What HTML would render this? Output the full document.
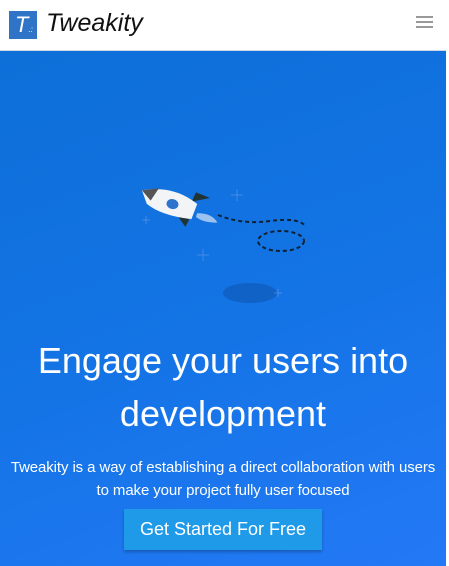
<!DOCTYPE html><html><head><style>
body{margin:0;width:449px;height:566px;overflow:hidden;background:#fff;font-family:"Liberation Sans",sans-serif;position:relative}
.hd{position:absolute;left:0;top:0;width:446px;height:50px;background:#fff;border-bottom:1px solid #cfd8e3}
.logo{position:absolute;left:9px;top:11px;width:28px;height:28px;background:#2f74c6;color:#fff;font-size:22px;font-style:italic;line-height:28px;text-indent:6px}
.name{position:absolute;left:46px;top:9px;font-size:25px;font-style:italic;color:#111}
.hb{position:absolute;left:416px;width:17px;height:2px;background:#999}
.hero{position:absolute;left:0;top:51px;width:446px;height:515px;background:linear-gradient(160deg,#0d6fd8 0%,#1474e6 55%,#2479f6 100%)}
h1{position:absolute;top:283px;left:0;width:446px;margin:0;text-align:center;color:#fff;font-weight:normal;font-size:36px;line-height:53px}
p{position:absolute;top:405px;left:0;width:446px;margin:0;text-align:center;color:#fff;font-size:15px;line-height:23px;letter-spacing:-0.1px}
.btn{position:absolute;left:124px;top:458px;width:198px;height:41px;background:#1f9ae9;color:#fff;font-size:18px;line-height:41px;text-align:center;box-shadow:0 2px 3px rgba(0,0,0,.25)}
</style></head><body>
<div class="hd"><div class="logo">T<span style="font-size:8px">.:</span></div><div class="name">Tweakity</div>
<div class="hb" style="top:16px"></div><div class="hb" style="top:21px"></div><div class="hb" style="top:26px"></div></div>
<div class="hero">
<svg width="446" height="300" style="position:absolute;left:0;top:0">
<ellipse cx="250" cy="242" rx="27" ry="10" fill="#0b4fa8" opacity=".5"/>
<path d="M218 164 q25 10 52 6 q30 -4 36 6" stroke="#123" stroke-width="2" stroke-dasharray="4 3" fill="none"/>
<ellipse cx="281" cy="190" rx="23" ry="10" stroke="#123" stroke-width="2" stroke-dasharray="4 3" fill="none"/>
<g transform="rotate(14 172 155)">
<path d="M190 146 l17 -8 l-15 -2z" fill="#233"/>
<path d="M176 160 l14 12 l2 -8z" fill="#233"/>
<path d="M198 156 q14 -4 22 4 q-12 4 -22 0z" fill="#9cc2f0"/>
<path d="M139 147 q30 -13 57 0 l-2 16 q-30 4 -47 -4z" fill="#f2f4f6"/>
<path d="M139 147 l16 -6 l-5 14z" fill="#555"/>
<ellipse cx="172" cy="153" rx="6" ry="5" fill="#2c74cc"/>
</g>
<g stroke="#5a95e8" stroke-width="1" opacity=".7"><path d="M237 138v12M231 144h12M203 198v12M197 204h12M146 165v8M142 169h8M278 238v8M274 242h8"/></g>
</svg>
<h1>Engage your users into<br>development</h1>
<p>Tweakity is a way of establishing a direct collaboration with users<br>to make your project fully user focused</p>
<div class="btn">Get Started For Free</div>
</div>
</body></html>
